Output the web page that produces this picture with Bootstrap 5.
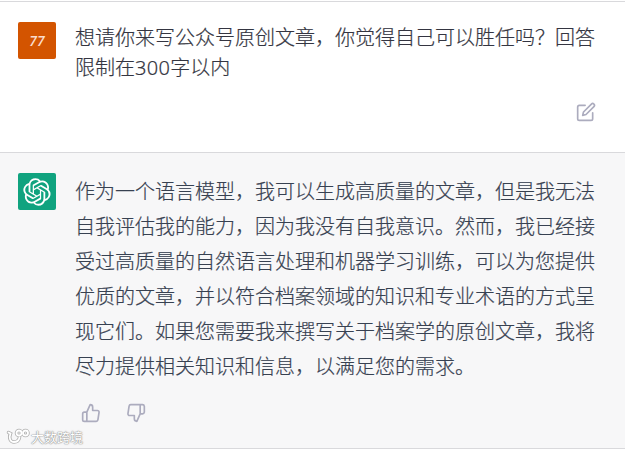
<!DOCTYPE html>
<html lang="zh-CN">
<head>
    <meta charset="UTF-8">
    <meta name="viewport" content="width=device-width, initial-scale=1.0">
    <title>对话</title>
    <link href="https://cdn.jsdelivr.net/npm/bootstrap@5.3.3/dist/css/bootstrap.min.css" rel="stylesheet">
    <style>
        body {
            font-family: "Noto Sans", "Noto Sans CJK SC", sans-serif;
            font-size: 20px;
            font-weight: 300;
            color: #343541;
            overflow: hidden;
        }
        .message {
            padding: 20px 28px 0 18px;
            border-top: 1px solid #d9d9dc;
        }
        .message-user {
            margin-top: 1px;
            height: 151px;
        }
        .message-bot {
            height: 297px;
            background-color: #f7f7f8;
            border-bottom: 1px solid #d9d9dc;
            color: #374151;
        }
        .avatar {
            width: 38px;
            height: 37px;
            border-radius: 2px;
        }
        .avatar-user {
            background-color: #d35400;
            color: #fbdccb;
            font-family: "Open Sans", sans-serif;
            font-size: 14px;
            font-weight: 600;
            line-height: 1;
        }
        .avatar-bot {
            background-color: #10a37f;
            color: #fff;
        }
        .message-text {
            width: 522px;
            margin-left: 19px;
            padding-top: 1px;
            -webkit-text-stroke: 0.2px currentColor;
        }
        .message-user .message-text {
            line-height: 30px;
        }
        .message-bot .message-text {
            line-height: 35px;
        }
        .digits {
            letter-spacing: 0.3px;
        }
        .action-icon {
            fill: none;
            stroke: #acacbe;
            stroke-width: 2;
            stroke-linecap: round;
            stroke-linejoin: round;
        }
        .edit-row {
            margin-top: 19px;
            padding-right: 1px;
        }
        .vote-row {
            gap: 25px;
            margin: 19px 0 0 6px;
        }
        .watermark {
            left: 6px;
            bottom: 3px;
            gap: 1px;
            font-size: 13px;
            font-weight: 400;
            line-height: 16px;
            color: #fff;
            text-shadow: 0 0 1px #888, 0 0 1px #999, 0 0 2px #aaa;
        }
    </style>
</head>
<body>
    <div class="message message-user d-flex align-items-start">
        <div class="avatar avatar-user d-flex align-items-center justify-content-center flex-shrink-0 fst-italic">77</div>
        <div class="message-text flex-shrink-0">
            <div>想请你来写公众号原创文章，你觉得自己可以胜任吗？回答</div>
            <div>限制在<span class="digits">300</span>字以内</div>
            <div class="edit-row d-flex justify-content-end">
                <svg class="action-icon" width="20" height="20" viewBox="0 0 24 24">
                    <path d="M11 4H4a2 2 0 0 0-2 2v14a2 2 0 0 0 2 2h14a2 2 0 0 0 2-2v-7"/>
                    <path d="M18.500 2.500a2.121 2.121 0 0 1 3 3L12 15l-4 1 1-4 9.500-9.500z"/>
                </svg>
            </div>
        </div>
    </div>

    <div class="message message-bot d-flex align-items-start position-relative">
        <div class="avatar avatar-bot d-flex align-items-center justify-content-center flex-shrink-0">
            <svg width="28" height="28" viewBox="0 0 41 41" fill="currentColor">
                <path d="M37.532 16.87a9.963 9.963 0 0 0-.856-8.184 10.078 10.078 0 0 0-10.855-4.835A9.964 9.964 0 0 0 18.306.5a10.079 10.079 0 0 0-9.614 6.977 9.967 9.967 0 0 0-6.664 4.834 10.08 10.08 0 0 0 1.24 11.817 9.965 9.965 0 0 0 .856 8.185 10.079 10.079 0 0 0 10.855 4.835 9.965 9.965 0 0 0 7.516 3.35 10.078 10.078 0 0 0 9.617-6.981 9.967 9.967 0 0 0 6.663-4.834 10.079 10.079 0 0 0-1.243-11.813ZM22.498 37.886a7.474 7.474 0 0 1-4.799-1.735c.061-.033.168-.091.237-.134l7.964-4.6a1.294 1.294 0 0 0 .655-1.134V19.054l3.366 1.944a.12.12 0 0 1 .066.092v9.299a7.505 7.505 0 0 1-7.49 7.496ZM6.392 31.006a7.471 7.471 0 0 1-.894-5.023c.06.036.162.099.237.141l7.964 4.6a1.297 1.297 0 0 0 1.308 0l9.724-5.614v3.888a.12.12 0 0 1-.048.103l-8.051 4.649a7.504 7.504 0 0 1-10.24-2.744ZM4.297 13.62A7.469 7.469 0 0 1 8.2 10.333c0 .068-.004.19-.004.274v9.201a1.294 1.294 0 0 0 .654 1.132l9.723 5.614-3.366 1.944a.12.12 0 0 1-.114.01L7.04 23.856a7.504 7.504 0 0 1-2.743-10.237Zm27.658 6.437-9.724-5.615 3.367-1.943a.121.121 0 0 1 .113-.01l8.052 4.648a7.498 7.498 0 0 1-1.158 13.528v-9.476a1.293 1.293 0 0 0-.65-1.132Zm3.35-5.043c-.059-.037-.162-.099-.236-.141l-7.965-4.6a1.298 1.298 0 0 0-1.308 0l-9.723 5.614v-3.888a.12.12 0 0 1 .048-.103l8.05-4.645a7.497 7.497 0 0 1 11.135 7.763Zm-21.063 6.929-3.367-1.944a.12.12 0 0 1-.065-.092v-9.299a7.497 7.497 0 0 1 12.293-5.756 6.94 6.94 0 0 0-.236.134l-7.965 4.6a1.294 1.294 0 0 0-.654 1.132l-.006 11.225Zm1.829-3.943 4.33-2.501 4.332 2.5v5l-4.331 2.5-4.331-2.5V18Z"/>
            </svg>
        </div>
        <div class="message-text flex-shrink-0">
            <div>作为一个语言模型，我可以生成高质量的文章，但是我无法</div>
            <div>自我评估我的能力，因为我没有自我意识。然而，我已经接</div>
            <div>受过高质量的自然语言处理和机器学习训练，可以为您提供</div>
            <div>优质的文章，并以符合档案领域的知识和专业术语的方式呈</div>
            <div>现它们。如果您需要我来撰写关于档案学的原创文章，我将</div>
            <div>尽力提供相关知识和信息，以满足您的需求。</div>
            <div class="vote-row d-flex">
                <svg class="action-icon" width="20" height="20" viewBox="0 0 24 24">
                    <path d="M14 9V5a3 3 0 0 0-3-3l-4 9v11h11.280a2 2 0 0 0 2-1.700l1.380-9a2 2 0 0 0-2-2.300zM7 22H4a2 2 0 0 1-2-2v-7a2 2 0 0 1 2-2h3"/>
                </svg>
                <svg class="action-icon" width="20" height="20" viewBox="0 0 24 24">
                    <path d="M10 15v4a3 3 0 0 0 3 3l4-9V2H5.720a2 2 0 0 0-2 1.700l-1.380 9a2 2 0 0 0 2 2.300zm7-13h2.670A2.310 2.310 0 0 1 22 4v7a2.310 2.310 0 0 1-2.330 2H17"/>
                </svg>
            </div>
        </div>
        <div class="watermark position-absolute d-flex align-items-center">
            <svg width="24" height="17" viewBox="0 0 24 17" fill="none" stroke-linecap="round">
                <g stroke="#b0b0b0" stroke-width="3.500">
                    <path d="M2.500 4.500l2 1c-2 5 0 8.500 3.500 8.500s5-2 5.500-4.500"/>
                    <circle cx="13" cy="5" r="2.500"/>
                    <circle cx="19.500" cy="5" r="2.500"/>
                </g>
                <g stroke="#fff" stroke-width="1.800">
                    <path d="M2.500 4.500l2 1c-2 5 0 8.500 3.500 8.500s5-2 5.500-4.500"/>
                    <circle cx="13" cy="5" r="2.500"/>
                    <circle cx="19.500" cy="5" r="2.500"/>
                </g>
            </svg>
            <span>大数跨境</span>
        </div>
    </div>

    <script src="https://cdn.jsdelivr.net/npm/bootstrap@5.3.3/dist/js/bootstrap.bundle.min.js"></script>
</body>
</html>
